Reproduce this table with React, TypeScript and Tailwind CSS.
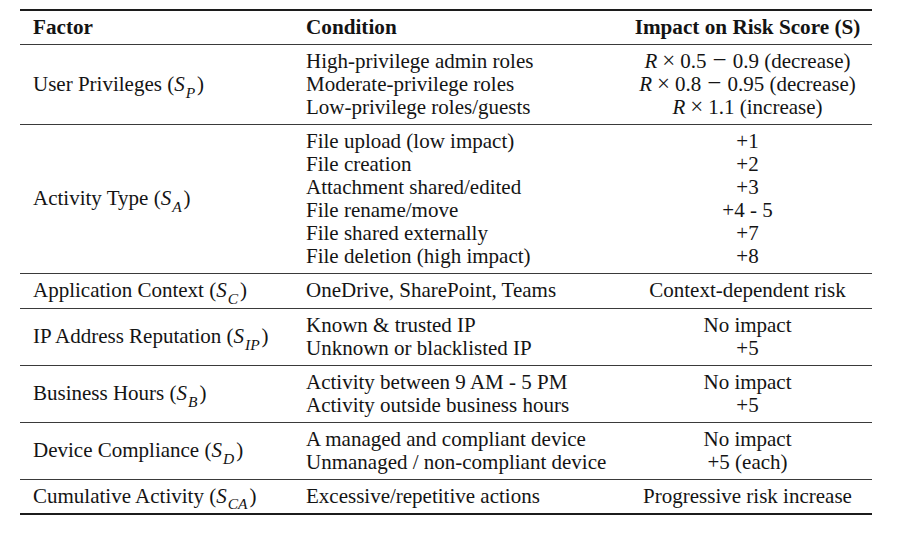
import React from "react";

function Sym({ s, sub }: { s: string; sub?: string }) {
  return (
    <span>
      <i className="mr-[1px]">{s}</i>
      {sub && (
        <sub className="italic text-[15.5px] mr-[2px] align-[-3px] leading-none">
          {sub}
        </sub>
      )}
    </span>
  );
}

function Rx({ a, b, note }: { a: string; b?: string; note: string }) {
  return (
    <>
      <i>R</i>
      <span className="mx-[5px] text-[23px] leading-[0]">×</span>
      {a}
      {b && (
        <>
          <span className="mx-[6px] text-[25px] leading-[0]">−</span>
          {b}
        </>
      )}{" "}
      ({note})
    </>
  );
}

type Row = {
  factor: React.ReactNode;
  conds: string[];
  impacts: React.ReactNode[];
};

const rows: Row[] = [
  {
    factor: (
      <>
        User Privileges (<Sym s="S" sub="P" />)
      </>
    ),
    conds: ["High-privilege admin roles", "Moderate-privilege roles", "Low-privilege roles/guests"],
    impacts: [
      <Rx a="0.5" b="0.9" note="decrease" />,
      <Rx a="0.8" b="0.95" note="decrease" />,
      <Rx a="1.1" note="increase" />,
    ],
  },
  {
    factor: (
      <>
        Activity Type (<Sym s="S" sub="A" />)
      </>
    ),
    conds: [
      "File upload (low impact)",
      "File creation",
      "Attachment shared/edited",
      "File rename/move",
      "File shared externally",
      "File deletion (high impact)",
    ],
    impacts: ["+1", "+2", "+3", "+4 - 5", "+7", "+8"],
  },
  {
    factor: (
      <>
        Application Context (<Sym s="S" sub="C" />)
      </>
    ),
    conds: ["OneDrive, SharePoint, Teams"],
    impacts: ["Context-dependent risk"],
  },
  {
    factor: (
      <>
        IP Address Reputation (<Sym s="S" sub="IP" />)
      </>
    ),
    conds: ["Known & trusted IP", "Unknown or blacklisted IP"],
    impacts: ["No impact", "+5"],
  },
  {
    factor: (
      <>
        Business Hours (<Sym s="S" sub="B" />)
      </>
    ),
    conds: ["Activity between 9 AM - 5 PM", "Activity outside business hours"],
    impacts: ["No impact", "+5"],
  },
  {
    factor: (
      <>
        Device Compliance (<Sym s="S" sub="D" />)
      </>
    ),
    conds: ["A managed and compliant device", "Unmanaged / non-compliant device"],
    impacts: ["No impact", "+5 (each)"],
  },
  {
    factor: (
      <>
        Cumulative Activity (<Sym s="S" sub="CA" />)
      </>
    ),
    conds: ["Excessive/repetitive actions"],
    impacts: ["Progressive risk increase"],
  },
];

export default function App() {
  return (
    <div className="w-[903px] h-[533px] bg-white pt-[9px] font-['Liberation_Serif',serif] text-[21px] leading-[23px] text-[#141414]">
      <div className="ml-[20px] w-[852px] border-t-2 border-b-2 border-[#1c1c1c]">
        <div className="grid grid-cols-[286px_317px_249px] py-[5px] font-bold text-[21.2px]">
          <div className="pl-[13px]">Factor</div>
          <div>Condition</div>
          <div className="flex justify-center whitespace-nowrap">Impact on Risk Score (S)</div>
        </div>
        {rows.map((r, i) => (
          <div
            key={i}
            className="grid grid-cols-[286px_317px_249px] py-[5px] border-t border-[#3a3a3a]"
          >
            <div className="pl-[13px] flex items-center">
              <span>{r.factor}</span>
            </div>
            <div className="flex flex-col">
              {r.conds.map((c, j) => (
                <div key={j}>{c}</div>
              ))}
            </div>
            <div className="flex flex-col items-center">
              {r.impacts.map((m, j) => (
                <div key={j} className="whitespace-nowrap">
                  {m}
                </div>
              ))}
            </div>
          </div>
        ))}
      </div>
    </div>
  );
}
